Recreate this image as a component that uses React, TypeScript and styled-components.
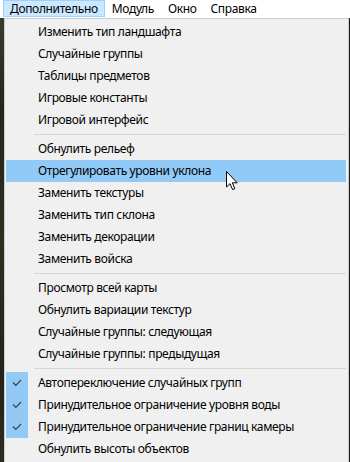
import React from "react";
import styled, { createGlobalStyle } from "styled-components";

type Entry =
  | { kind: "item"; label: string; active?: boolean; checked?: boolean }
  | { kind: "sep" };

const entries: Entry[] = [
  { kind: "item", label: "Изменить тип ландшафта" },
  { kind: "item", label: "Случайные группы" },
  { kind: "item", label: "Таблицы предметов" },
  { kind: "item", label: "Игровые константы" },
  { kind: "item", label: "Игровой интерфейс" },
  { kind: "sep" },
  { kind: "item", label: "Обнулить рельеф" },
  { kind: "item", label: "Отрегулировать уровни уклона", active: true },
  { kind: "item", label: "Заменить текстуры" },
  { kind: "item", label: "Заменить тип склона" },
  { kind: "item", label: "Заменить декорации" },
  { kind: "item", label: "Заменить войска" },
  { kind: "sep" },
  { kind: "item", label: "Просмотр всей карты" },
  { kind: "item", label: "Обнулить вариации текстур" },
  { kind: "item", label: "Случайные группы: следующая" },
  { kind: "item", label: "Случайные группы: предыдущая" },
  { kind: "sep" },
  { kind: "item", label: "Автопереключение случайных групп", checked: true },
  { kind: "item", label: "Принудительное ограничение уровня воды", checked: true },
  { kind: "item", label: "Принудительное ограничение границ камеры", checked: true },
  { kind: "item", label: "Обнулить высоты объектов" },
];

const topMenus = ["Дополнительно", "Модуль", "Окно", "Справка"];

const CheckMark: React.FC = () => (
  <svg width="10" height="8" viewBox="0 0 10 8">
    <path d="M1 3.5 L3.8 6.3 L9 1" fill="none" stroke="#404040" strokeWidth="1.2" />
  </svg>
);

const Cursor: React.FC = () => (
  <CursorWrap>
    <svg width="13" height="20" viewBox="0 0 13 20">
      <path
        d="M0.5 0.5 L0.5 16 L4 12.6 L6.6 18.6 L8.8 17.6 L6.3 11.8 L11.2 11.8 Z"
        fill="#fff"
        stroke="#000"
        strokeWidth="1"
        strokeLinejoin="miter"
      />
    </svg>
  </CursorWrap>
);

const App: React.FC = () => {
  return (
    <>
      <GlobalStyle />
      <Page>
        <MenuBar>
          {topMenus.map((m, i) => (
            <TopItem key={m} open={i === 0}>
              {m}
            </TopItem>
          ))}
        </MenuBar>
        <Body>
          <GameStrip />
          <Dropdown>
            {entries.map((e, i) =>
              e.kind === "sep" ? (
                <Separator key={i} />
              ) : (
                <Row key={i} active={e.active}>
                  <CheckCell checked={e.checked}>{e.checked && <CheckMark />}</CheckCell>
                  <Label>{e.label}</Label>
                </Row>
              )
            )}
          </Dropdown>
          <EdgeStrip />
        </Body>
        <Cursor />
      </Page>
    </>
  );
};

export default App;

const GlobalStyle = createGlobalStyle`
  html, body {
    margin: 0;
    padding: 0;
    background: #1f2119;
  }
  body {
    font-family: "Noto Sans", "Open Sans", sans-serif;
    font-size: 12px;
    letter-spacing: -0.35px;
    color: #000;
  }
`;

const Page = styled.div`
  position: relative;
  width: 350px;
  height: 462px;
  overflow: hidden;
  display: flex;
  flex-direction: column;
`;

const MenuBar = styled.div`
  height: 18px;
  background: #ffffff;
  display: flex;
  align-items: stretch;
  padding-left: 3px;
  flex-shrink: 0;
`;

const TopItem = styled.div<{ open?: boolean }>`
  display: flex;
  align-items: center;
  padding: 0 6px 0 6px;
  box-sizing: border-box;
  height: 17px;
  background: ${(p) => (p.open ? "#cce8ff" : "transparent")};
  border: 1px solid ${(p) => (p.open ? "#99d1ff" : "transparent")};
  line-height: 15px;
`;

const Body = styled.div`
  flex: 1;
  display: flex;
  min-height: 0;
`;

const GameStrip = styled.div`
  width: 4px;
  background: linear-gradient(180deg, #3a3b30 0%, #23261c 20%, #2c3022 50%, #22241b 80%, #2a2c20 100%);
`;

const EdgeStrip = styled.div`
  width: 1px;
  background: #1b1c16;
`;

const Dropdown = styled.div`
  flex: 1;
  background: #f0f0f0;
  border: 1px solid #cccccc;
  border-bottom: none;
  padding: 2px 2px 0 1px;
  display: flex;
  flex-direction: column;
`;

const Row = styled.div<{ active?: boolean }>`
  height: 22px;
  display: flex;
  align-items: center;
  background: ${(p) => (p.active ? "#91c9f7" : "transparent")};
  flex-shrink: 0;
`;

const CheckCell = styled.div<{ checked?: boolean }>`
  width: 22px;
  height: 22px;
  display: flex;
  align-items: center;
  justify-content: center;
  background: ${(p) => (p.checked ? "#91c9f7" : "transparent")};
`;

const Label = styled.span`
  margin-left: 10px;
  white-space: nowrap;
  line-height: 22px;
`;

const Separator = styled.div`
  height: 7px;
  flex-shrink: 0;
  display: flex;
  align-items: center;
  padding-left: 28px;

  &::after {
    content: "";
    flex: 1;
    height: 1px;
    background: #d7d7d7;
  }
`;

const CursorWrap = styled.div`
  position: absolute;
  left: 226px;
  top: 171px;
  line-height: 0;
`;
